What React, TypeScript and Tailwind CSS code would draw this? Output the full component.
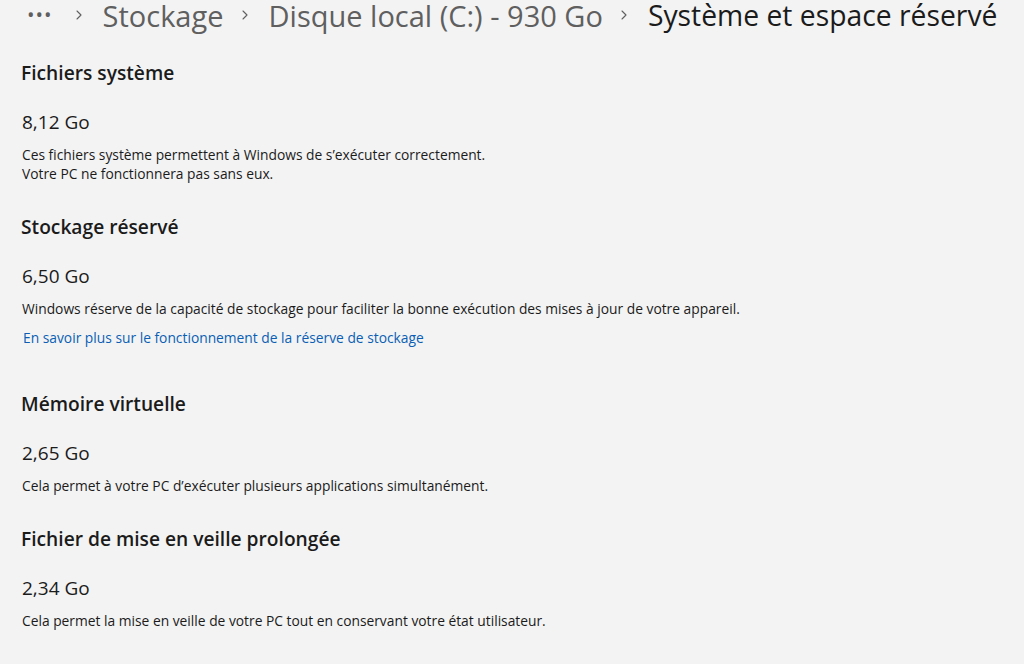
import { ChevronRight } from "lucide-react";

type Section = {
  title: string;
  size: string;
  lines: string[];
  link?: string;
};

const sections: Section[] = [
  {
    title: "Fichiers système",
    size: "8,12 Go",
    lines: [
      "Ces fichiers système permettent à Windows de s’exécuter correctement.",
      "Votre PC ne fonctionnera pas sans eux.",
    ],
  },
  {
    title: "Stockage réservé",
    size: "6,50 Go",
    lines: [
      "Windows réserve de la capacité de stockage pour faciliter la bonne exécution des mises à jour de votre appareil.",
    ],
    link: "En savoir plus sur le fonctionnement de la réserve de stockage",
  },
  {
    title: "Mémoire virtuelle",
    size: "2,65 Go",
    lines: ["Cela permet à votre PC d’exécuter plusieurs applications simultanément."],
  },
  {
    title: "Fichier de mise en veille prolongée",
    size: "2,34 Go",
    lines: ["Cela permet la mise en veille de votre PC tout en conservant votre état utilisateur."],
  },
];

const Chevron = () => (
  <ChevronRight className="mr-[16px] ml-[13px] h-4 w-4 shrink-0 text-[#5f5f5f]" strokeWidth={1.6} />
);

export default function App() {
  return (
    <div
      className="h-[664px] w-[1024px] overflow-hidden bg-[#f3f3f3] pl-[21px]"
      style={{ fontFamily: '"Open Sans", "Noto Sans", sans-serif' }}
    >
      {/* Breadcrumb */}
      <div className="flex h-[30px] items-center whitespace-nowrap font-medium leading-none">
        <span className="ml-[6px] mr-[5px] text-[20px] tracking-[1px] text-[#5f5f5f]">•••</span>
        <Chevron />
        <span className="text-[29px] text-[#5f5f5f]">Stockage</span>
        <Chevron />
        <span className="text-[29px] text-[#5f5f5f]">Disque local (C:) - 930 Go</span>
        <Chevron />
        <span className="text-[28.3px] text-[#1b1b1b]">Système et espace réservé</span>
      </div>

      <div className="mt-[29px]">
        {sections.map((s, i) => (
          <div key={s.title} className={i === 0 ? "" : i === 2 ? "mt-[43px]" : "mt-[30px]"}>
            <h2 className="h-[28px] text-[19.2px] leading-[28px] font-semibold text-[#1b1b1b]">
              {s.title}
            </h2>
            <div className="mt-[21px] h-[28px] pl-px text-[19px] leading-[28px] text-[#1b1b1b]">
              {s.size}
            </div>
            <div className="mt-[9px] pl-px text-[13.8px] leading-[19px] text-[#1b1b1b]">
              {s.lines.map((l) => (
                <p key={l}>{l}</p>
              ))}
            </div>
            {s.link && (
              <a
                className="mt-[10px] block pl-[2px] text-[13.8px] leading-[19px] text-[#0a5fb4]"
                href="#"
              >
                {s.link}
              </a>
            )}
          </div>
        ))}
      </div>
    </div>
  );
}
